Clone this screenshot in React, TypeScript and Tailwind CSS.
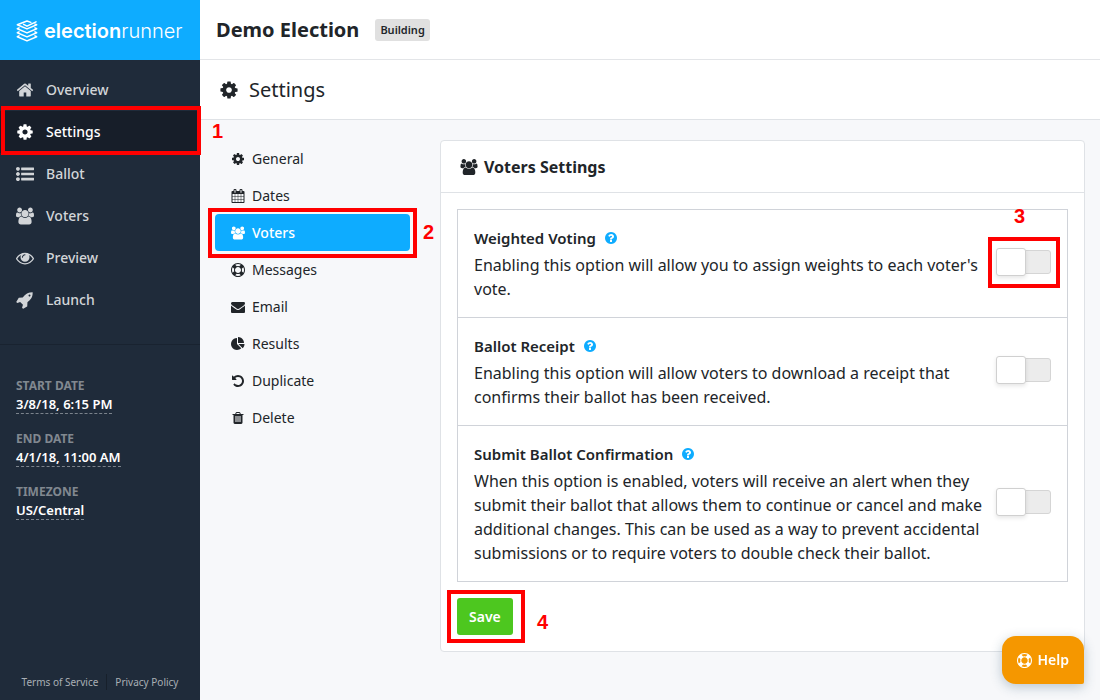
import { useState } from 'react';
import type { ReactNode } from 'react';

const paths = {
  home: 'M1472 992v480q0 26-19 45t-45 19h-384v-384h-256v384h-384q-26 0-45-19t-19-45v-480q0-1 .5-3t.5-3l575-474 575 474q1 2 1 6zm223-69l-62 74q-8 9-21 11h-3q-13 0-21-7l-692-577-692 577q-12 8-24 7-13-2-21-11l-62-74q-8-10-7-23.5t11-21.5l719-599q32-26 76-26t76 26l244 204v-195q0-14 9-23t23-9h192q14 0 23 9t9 23v408l219 182q10 8 11 21.5t-7 23.5z',
  cog: 'M1152 896q0-106-75-181t-181-75-181 75-75 181 75 181 181 75 181-75 75-181zm512-109v222q0 12-8 23t-20 13l-185 28q-19 54-39 91 35 50 107 138 10 12 10 25t-9 23q-27 37-99 108t-94 71q-12 0-26-9l-138-108q-44 23-91 38-16 136-29 186-7 28-36 28h-222q-14 0-24.5-8.5t-11.5-21.5l-28-184q-49-16-90-37l-141 107q-10 9-25 9-14 0-25-11-126-114-165-168-7-10-7-23 0-12 8-23 15-21 51-66.5t54-70.5q-27-50-41-99l-183-27q-13-2-21-12.5t-8-23.5v-222q0-12 8-23t19-13l186-28q14-46 39-92-40-57-107-138-10-12-10-24 0-10 9-23 26-36 98.5-107.5t94.5-71.5q13 0 26 10l138 107q44-23 91-38 16-136 29-186 7-28 36-28h222q14 0 24.5 8.5t11.5 21.5l28 184q49 16 90 37l142-107q9-9 24-9 13 0 25 10 129 119 165 170 7 8 7 22 0 12-8 23-15 21-51 66.5t-54 70.5q26 50 41 98l183 28q13 2 21 12.5t8 23.5z',
  list: 'M384 1408q0 80-56 136t-136 56-136-56-56-136 56-136 136-56 136 56 56 136zm0-512q0 80-56 136t-136 56-136-56-56-136 56-136 136-56 136 56 56 136zm1408 416v192q0 13-9.5 22.5t-22.5 9.5h-1216q-13 0-22.5-9.5t-9.5-22.5v-192q0-13 9.5-22.5t22.5-9.5h1216q13 0 22.5 9.5t9.5 22.5zm-1408-928q0 80-56 136t-136 56-136-56-56-136 56-136 136-56 136 56 56 136zm1408 416v192q0 13-9.5 22.5t-22.5 9.5h-1216q-13 0-22.5-9.5t-9.5-22.5v-192q0-13 9.5-22.5t22.5-9.5h1216q13 0 22.5 9.5t9.5 22.5zm0-512v192q0 13-9.5 22.5t-22.5 9.5h-1216q-13 0-22.5-9.5t-9.5-22.5v-192q0-13 9.5-22.5t22.5-9.5h1216q13 0 22.5 9.5t9.5 22.5z',
  users: 'M593 896q-162 5-265 128h-134q-82 0-138-40.5t-56-118.5q0-353 124-353 6 0 43.5 21t97.5 42.5 119 21.5q67 0 133-23-5 37-5 66 0 139 81 256zm1071 637q0 120-73 189.5t-194 69.5h-874q-121 0-194-69.5t-73-189.5q0-53 3.5-103.5t14-109 26.5-108.5 43-97.5 62-81 85.5-53.5 111.5-20q10 0 43 21.5t73 48 107 48 135 21.5 135-21.5 107-48 73-48 43-21.5q61 0 111.5 20t85.5 53.5 62 81 43 97.5 26.5 108.5 14 109 3.5 103.5zm-1024-1277q0 106-75 181t-181 75-181-75-75-181 75-181 181-75 181 75 75 181zm704 384q0 159-112.5 271.5t-271.5 112.5-271.5-112.5-112.5-271.5 112.5-271.5 271.5-112.5 271.5 112.5 112.5 271.5zm576 225q0 78-56 118.5t-138 40.5h-134q-103-123-265-128 81-117 81-256 0-29-5-66 66 23 133 23 59 0 119-21.5t97.5-42.5 43.5-21q124 0 124 353zm-128-609q0 106-75 181t-181 75-181-75-75-181 75-181 181-75 181 75 75 181z',
  eye: 'M1664 960q-152-236-381-353 61 104 61 225 0 185-131.5 316.5t-316.5 131.5-316.5-131.5-131.5-316.5q0-121 61-225-229 117-381 353 133 205 333.5 326.5t434.5 121.5 434.5-121.5 333.5-326.5zm-720-384q0-20-14-34t-34-14q-125 0-214.5 89.5t-89.5 214.5q0 20 14 34t34 14 34-14 14-34q0-86 61-147t147-61q20 0 34-14t14-34zm848 384q0 34-20 69-140 230-376.5 368.5t-499.5 138.5-499.5-139-376.5-368q-20-35-20-69t20-69q140-229 376.5-368t499.5-139 499.5 139 376.5 368q20 35 20 69z',
  rocket: 'M1440 448q0-40-28-68t-68-28-68 28-28 68 28 68 68 28 68-28 28-68zm224-288q0 249-75.5 430.5t-253.5 360.5q-81 80-195 176l-20 379q-2 16-16 26l-384 224q-7 4-16 4-12 0-23-9l-64-64q-13-14-8-32l85-276-281-281-276 85q-3 1-9 1-14 0-23-9l-64-64q-17-19-5-39l224-384q10-14 26-16l379-20q96-114 176-195 188-187 358-258t431-71q14 0 24 9.5t10 22.5z',
  calendar: 'M192 1664h288v-288h-288v288zm352 0h320v-288h-320v288zm-352-352h288v-320h-288v320zm352 0h320v-320h-320v320zm-352-384h288v-288h-288v288zm736 736h320v-288h-320v288zm-384-736h320v-288h-320v288zm768 736h288v-288h-288v288zm-384-352h320v-320h-320v320zm-352-864v-288q0-13-9.5-22.5t-22.5-9.5h-64q-13 0-22.5 9.5t-9.5 22.5v288q0 13 9.5 22.5t22.5 9.5h64q13 0 22.5-9.5t9.5-22.5zm736 864h288v-320h-288v320zm-384-384h320v-288h-320v288zm384 0h288v-288h-288v288zm32-480v-288q0-13-9.5-22.5t-22.5-9.5h-64q-13 0-22.5 9.5t-9.5 22.5v288q0 13 9.5 22.5t22.5 9.5h64q13 0 22.5-9.5t9.5-22.5zm384-64v1280q0 52-38 90t-90 38h-1408q-52 0-90-38t-38-90v-1280q0-52 38-90t90-38h128v-96q0-66 47-113t113-47h64q66 0 113 47t47 113v96h384v-96q0-66 47-113t113-47h64q66 0 113 47t47 113v96h128q52 0 90 38t38 90z',
  ring: 'M896 0q182 0 348 71t286 191 191 286 71 348-71 348-191 286-286 191-348 71-348-71-286-191-191-286-71-348 71-348 191-286 286-191 348-71zm0 128q-190 0-361 90l194 194q82-28 167-28t167 28l194-194q-171-90-361-90zm-678 1129l194-194q-28-82-28-167t28-167l-194-194q-90 171-90 361t90 361zm678 407q190 0 361-90l-194-194q-82 28-167 28t-167-28l-194 194q171 90 361 90zm0-384q159 0 271.5-112.5t112.5-271.5-112.5-271.5-271.5-112.5-271.5 112.5-112.5 271.5 112.5 271.5 271.5 112.5zm484-217l194 194q90-171 90-361t-90-361l-194 194q28 82 28 167t-28 167z',
  envelope: 'M1792 710v794q0 66-47 113t-113 47h-1472q-66 0-113-47t-47-113v-794q44 49 101 87 362 246 497 345 57 42 92.5 65.5t94.5 48 110 24.5h2q51 0 110-24.5t94.5-48 92.5-65.5q170-123 498-345 57-39 100-87zm0-294q0 79-49 151t-122 123q-376 261-468 325-10 7-42.5 30.5t-54 38-52 32.5-57.5 27-50 9h-2q-23 0-50-9t-57.5-27-52-32.5-54-38-42.5-30.5q-91-64-262-182.5t-205-142.5q-62-42-117-115.5t-55-136.5q0-78 41.5-130t118.5-52h1472q65 0 112.5 47t47.5 113z',
  pie: 'M768 890l546 546q-106 108-247.5 168t-298.5 60q-209 0-385.5-103t-279.5-279.5-103-385.5 103-385.5 279.5-279.5 385.5-103v762zm187 6h773q0 157-60 298.5t-168 247.5zm709-128h-768v-768q209 0 385.5 103t279.5 279.5 103 385.5z',
  undo: 'M1664 896q0 156-61 298t-164 245-245 164-298 61q-172 0-327-72.5t-264-204.5q-7-10-6.5-22.5t8.5-20.5l137-138q10-9 25-9 16 2 23 12 73 95 179 147t225 52q104 0 198.5-40.5t163.5-109.5 109.5-163.5 40.5-198.5-40.5-198.5-109.5-163.5-163.5-109.5-198.5-40.5q-98 0-188 35.5t-160 101.5l137 138q31 30 14 69-17 40-59 40h-448q-26 0-45-19t-19-45v-448q0-42 40-59 39-17 69 14l130 129q107-101 244.5-156.5t284.5-55.5q156 0 298 61t245 164 164 245 61 298z',
  trash: 'M704 1376v-704q0-14-9-23t-23-9h-64q-14 0-23 9t-9 23v704q0 14 9 23t23 9h64q14 0 23-9t9-23zm256 0v-704q0-14-9-23t-23-9h-64q-14 0-23 9t-9 23v704q0 14 9 23t23 9h64q14 0 23-9t9-23zm256 0v-704q0-14-9-23t-23-9h-64q-14 0-23 9t-9 23v704q0 14 9 23t23 9h64q14 0 23-9t9-23zm-544-992h448l-48-117q-7-9-17-11h-317q-10 2-17 11zm928 32v64q0 14-9 23t-23 9h-96v948q0 83-47 143.5t-113 60.5h-832q-66 0-113-58.5t-47-141.5v-952h-96q-14 0-23-9t-9-23v-64q0-14 9-23t23-9h309l70-167q15-37 54-63t79-26h320q40 0 79 26t54 63l70 167h309q14 0 23 9t9 23z',
  question: 'M1024 1376v-192q0-14-9-23t-23-9h-192q-14 0-23 9t-9 23v192q0 14 9 23t23 9h192q14 0 23-9t9-23zm256-672q0-88-55.5-163t-138.5-116-170-41q-243 0-371 213-15 24 8 42l132 100q7 6 19 6 16 0 25-12 53-68 86-92 34-24 86-24 48 0 85.5 26t37.5 59q0 38-20 61t-68 45q-63 28-115.5 86.5t-52.5 125.5v36q0 14 9 23t23 9h192q14 0 23-9t9-23q0-19 21.5-49.5t54.5-49.5q32-18 49-28.5t46-35 44.5-48 28-60.5 12.5-81zm384 192q0 209-103 385.5t-279.5 279.5-385.5 103-385.5-103-279.5-279.5-103-385.5 103-385.5 279.5-279.5 385.5-103 385.5 103 279.5 279.5 103 385.5z',
};

type IconName = keyof typeof paths;

const Icon = ({ name, className }: { name: IconName; className: string }) => (
  <svg viewBox={name === 'users' ? '0 0 1920 1792' : '0 0 1792 1792'} className={`shrink-0 ${className}`} fill="currentColor" aria-hidden="true">
    <path d={paths[name]} />
  </svg>
);

const navItems: { name: string; icon: IconName }[] = [
  { name: 'Overview', icon: 'home' },
  { name: 'Settings', icon: 'cog' },
  { name: 'Ballot', icon: 'list' },
  { name: 'Voters', icon: 'users' },
  { name: 'Preview', icon: 'eye' },
  { name: 'Launch', icon: 'rocket' },
];

const details = [
  { label: 'START DATE', value: '3/8/18, 6:15 PM' },
  { label: 'END DATE', value: '4/1/18, 11:00 AM' },
  { label: 'TIMEZONE', value: 'US/Central' },
];

const tabs: { name: string; icon: IconName }[] = [
  { name: 'General', icon: 'cog' },
  { name: 'Dates', icon: 'calendar' },
  { name: 'Voters', icon: 'users' },
  { name: 'Messages', icon: 'ring' },
  { name: 'Email', icon: 'envelope' },
  { name: 'Results', icon: 'pie' },
  { name: 'Duplicate', icon: 'undo' },
  { name: 'Delete', icon: 'trash' },
];

const options = [
  {
    id: 'weighted',
    title: 'Weighted Voting',
    text: "Enabling this option will allow you to assign weights to each voter's vote.",
  },
  {
    id: 'receipt',
    title: 'Ballot Receipt',
    text: 'Enabling this option will allow voters to download a receipt that confirms their ballot has been received.',
  },
  {
    id: 'confirmation',
    title: 'Submit Ballot Confirmation',
    text: 'When this option is enabled, voters will receive an alert when they submit their ballot that allows them to continue or cancel and make additional changes. This can be used as a way to prevent accidental submissions or to require voters to double check their ballot.',
  },
];

// Red frame and step number drawn over a control
const Step = ({ frame, label, children }: { frame: string; label: string; children: ReactNode }) => (
  <>
    <span className={`pointer-events-none absolute z-10 border-4 border-[#ff0000] ${frame}`} />
    <span className={`pointer-events-none absolute z-10 font-['Liberation_Sans',sans-serif] text-xl leading-6 font-bold text-[#ff0000] ${label}`}>
      {children}
    </span>
  </>
);

const Logo = () => (
  <a href="#" className="flex h-15 items-center gap-1.5 bg-[#0eacff] pt-0.5 pl-4 text-white">
    <svg viewBox="0 0 22 22" className="h-[22px] w-[22px] shrink-0" fill="none" stroke="currentColor" strokeWidth="1.5" strokeLinejoin="round" strokeLinecap="round" aria-hidden="true">
      <path d="M14.8 2.4 11 1 1.3 4.8 11 8.900l9.700-4.100-1.800-.7" />
      <path d="M7.600 4.400 11 6.200l9-4.400" />
      <path d="M3 7.800 1.300 8.700 11 12.900l9.700-4.200-1.700-.9" />
      <path d="M3 11.800l-1.700.9L11 16.900l9.700-4.200-1.700-.9" />
      <path d="M3 15.800l-1.700.9L11 20.900l9.700-4.200-1.700-.9" />
    </svg>
    <span className="font-[Inter,sans-serif] text-xl leading-6">
      <span className="font-semibold">election</span>
      <span className="font-light">runner</span>
    </span>
  </a>
);

const Sidebar = () => (
  <aside className="flex w-50 shrink-0 flex-col bg-[#1f2b3a]">
    <Logo />
    <nav className="border-b border-[#192330] pt-[9px] pb-[23px]">
      {navItems.map(item => {
        const isActive = item.name === 'Settings';
        return (
          <a
            key={item.name}
            href="#"
            className={`relative flex h-[42px] items-center gap-3 pl-4 text-sm font-medium ${isActive ? 'bg-[#171e29] text-white' : 'text-[#d2d5d8]'}`}
          >
            <Icon name={item.icon} className="h-[18px] w-[18px]" />
            {item.name}
            {isActive && (
              <Step frame="-top-[5px] -right-px -bottom-0.5 left-px" label="top-2 left-53">
                1
              </Step>
            )}
          </a>
        );
      })}
    </nav>
    <dl className="flex flex-col gap-4 px-4 pt-8">
      {details.map(item => (
        <div key={item.label}>
          <dt className="text-xs leading-[18px] font-bold text-[#818890]">{item.label}</dt>
          <dd className="flex">
            <a href="#" className="border-b border-dashed border-[#7b838c] text-[13px] leading-[18px] font-semibold text-white">
              {item.value}
            </a>
          </dd>
        </div>
      ))}
    </dl>
    <footer className="mt-auto mb-2.5 flex justify-center text-[10px] leading-4 text-[#a9afb5]">
      <a href="#" className="border-r border-[#17202b] pr-2">Terms of Service</a>
      <a href="#" className="pl-2">Privacy Policy</a>
    </footer>
  </aside>
);

const SettingsTabs = () => (
  <nav className="w-[195px] shrink-0">
    {tabs.map(tab => {
      const isActive = tab.name === 'Voters';
      return (
        <a
          key={tab.name}
          href="#"
          className={`relative flex h-[37px] items-center gap-[7px] rounded px-4 text-sm ${isActive ? 'bg-[#0eacff] font-medium text-white' : ''}`}
        >
          <Icon name={tab.icon} className="h-[14px] w-[14px]" />
          {tab.name}
          {isActive && (
            <Step frame="-inset-x-[7px] -top-1.5 -bottom-[7px]" label="top-1.5 left-52">
              2
            </Step>
          )}
        </a>
      );
    })}
  </nav>
);

const Switch = ({ id }: { id: string }) => {
  const [checked, setChecked] = useState(false);
  return (
    <input
      id={id}
      type="checkbox"
      role="switch"
      checked={checked}
      onChange={() => setChecked(!checked)}
      className="relative block h-6 w-[55px] cursor-pointer appearance-none rounded-[3px] border border-[#d5d5d5] bg-[#ececec] before:absolute before:-top-[3px] before:-left-px before:h-7 before:w-[30px] before:rounded-[3px] before:border before:border-[#d0d0d0] before:bg-white before:shadow-[0_2px_4px_rgba(0,0,0,0.1)] checked:bg-[#4dc71f] checked:before:left-6"
    />
  );
};

const VotersCard = () => (
  <section className="min-w-0 flex-1 rounded border border-[#dfe2e6] bg-white">
    <h3 className="flex h-[52px] items-center gap-1.5 border-b border-[#dfe2e6] px-[19px] font-bold">
      <Icon name="users" className="h-4 w-[18px]" />
      Voters Settings
    </h3>
    <form className="p-4" onSubmit={e => e.preventDefault()}>
      <div className="divide-y divide-[#d0d3d9] border border-[#d0d3d9]">
        {options.map(option => (
          <div key={option.id} className="flex items-center gap-2 p-4">
            <div className="min-w-0 flex-1">
              <div className="mb-[3px] flex items-center gap-2">
                <label htmlFor={option.id} className="text-[15px] leading-6 font-semibold">{option.title}</label>
                <a href="#" aria-label={`About ${option.title}`} className="text-[#0eacff]">
                  <Icon name="question" className="h-[14px] w-[14px]" />
                </a>
              </div>
              <p className="text-base leading-6">{option.text}</p>
            </div>
            <div className="relative mb-1">
              <Switch id={option.id} />
              {option.id === 'weighted' && (
                <Step frame="-top-[13px] -right-[9px] -bottom-3.5 -left-2" label="-top-11.5 left-4.5">
                  3
                </Step>
              )}
            </div>
          </div>
        ))}
      </div>
      <div className="relative mt-4 w-fit">
        <button type="submit" className="block h-[37px] rounded-[3px] bg-[#4dc71f] px-3 text-sm font-semibold text-white">
          Save
        </button>
        <Step frame="-top-2 -right-3 -bottom-2 -left-2.5" label="top-3 left-20">
          4
        </Step>
      </div>
    </form>
  </section>
);

const App = () => (
  <div className="flex min-h-screen bg-[#f7f8fa] font-['Noto_Sans',sans-serif] text-[#212529]">
    <Sidebar />
    <div className="min-w-0 flex-1">
      <header className="flex h-15 items-center gap-4 border-b border-[#e3e5e8] bg-white px-4">
        <h1 className="text-xl font-bold">Demo Election</h1>
        <span className="rounded-[3px] bg-[#e0e0e0] px-[5px] py-[3px] text-[11px] leading-4 font-semibold">Building</span>
      </header>
      <div className="flex h-15 items-center gap-2.5 border-b border-[#dfe2e6] bg-white px-[19px]">
        <Icon name="cog" className="h-5 w-5" />
        <h2 className="text-xl">Settings</h2>
      </div>
      <main className="flex items-start gap-[30px] px-[15px] py-5">
        <SettingsTabs />
        <VotersCard />
      </main>
    </div>
    <button
      type="button"
      className="fixed right-4 bottom-4 flex h-12 items-center gap-1.5 rounded-[14px] rounded-br-[2px] bg-[#f59700] px-[15px] text-sm font-semibold text-white shadow-[0_3px_12px_rgba(40,80,110,0.3)]"
    >
      <Icon name="ring" className="h-[15px] w-[15px]" />
      Help
    </button>
  </div>
);

export default App;
